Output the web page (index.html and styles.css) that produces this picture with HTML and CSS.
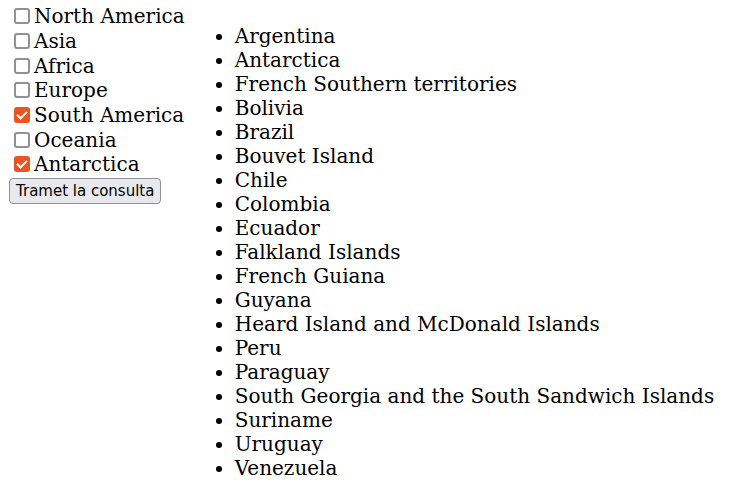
FILE: index.html
```html
<!DOCTYPE html>
<html>
<head>
<meta charset="utf-8">
<link rel="stylesheet" href="styles.css">
</head>
<body>
<div class="page">
  <form class="filters">
    <label class="opt"><input type="checkbox" class="box">North America</label>
    <label class="opt"><input type="checkbox" class="box">Asia</label>
    <label class="opt"><input type="checkbox" class="box">Africa</label>
    <label class="opt"><input type="checkbox" class="box">Europe</label>
    <label class="opt"><input type="checkbox" class="box" checked>South America</label>
    <label class="opt"><input type="checkbox" class="box">Oceania</label>
    <label class="opt"><input type="checkbox" class="box" checked>Antarctica</label>
    <button type="button" class="submit">Tramet la consulta</button>
  </form>
  <ul class="countries">
    <li>Argentina</li>
    <li>Antarctica</li>
    <li>French Southern territories</li>
    <li>Bolivia</li>
    <li>Brazil</li>
    <li>Bouvet Island</li>
    <li>Chile</li>
    <li>Colombia</li>
    <li>Ecuador</li>
    <li>Falkland Islands</li>
    <li>French Guiana</li>
    <li>Guyana</li>
    <li>Heard Island and McDonald Islands</li>
    <li>Peru</li>
    <li>Paraguay</li>
    <li>South Georgia and the South Sandwich Islands</li>
    <li>Suriname</li>
    <li>Uruguay</li>
    <li>Venezuela</li>
  </ul>
</div>
</body>
</html>
```
FILE: styles.css
```css
html, body {
  margin: 0;
  padding: 0;
  background: #ffffff;
}
body {
  font-family: "DejaVu Serif", serif;
  font-size: 20px;
  color: #000000;
}
.page {
  display: flex;
  align-items: flex-start;
  padding: 4px 0 0 9px;
}
.filters {
  display: flex;
  flex-direction: column;
  align-items: flex-start;
}
.opt {
  display: flex;
  align-items: center;
  height: 24.67px;
  line-height: 24px;
  white-space: nowrap;
}
.box {
  appearance: none;
  -webkit-appearance: none;
  box-sizing: border-box;
  width: 16px;
  height: 16px;
  margin: 0 4px 0 5px;
  border: 2px solid #8f8f9d;
  border-radius: 3px;
  background: #ffffff;
  position: relative;
}
.box:checked {
  background: #e95420;
  border-color: #e95420;
}
.box:checked::after {
  content: "";
  position: absolute;
  left: 3px;
  top: 0px;
  width: 4px;
  height: 8px;
  border: solid #ffffff;
  border-width: 0 2px 2px 0;
  transform: rotate(45deg);
}
.submit {
  margin: 1px 0 0 0;
  box-sizing: border-box;
  height: 26px;
  padding: 0 6px;
  font-family: "DejaVu Sans", sans-serif;
  font-size: 15px;
  color: #000000;
  background: #e9e9ed;
  border: 1px solid #8f8f9d;
  border-radius: 4px;
}
.countries {
  margin: 20px 0 0 0;
  padding: 0 0 0 50px;
  line-height: 24px;
}
```
